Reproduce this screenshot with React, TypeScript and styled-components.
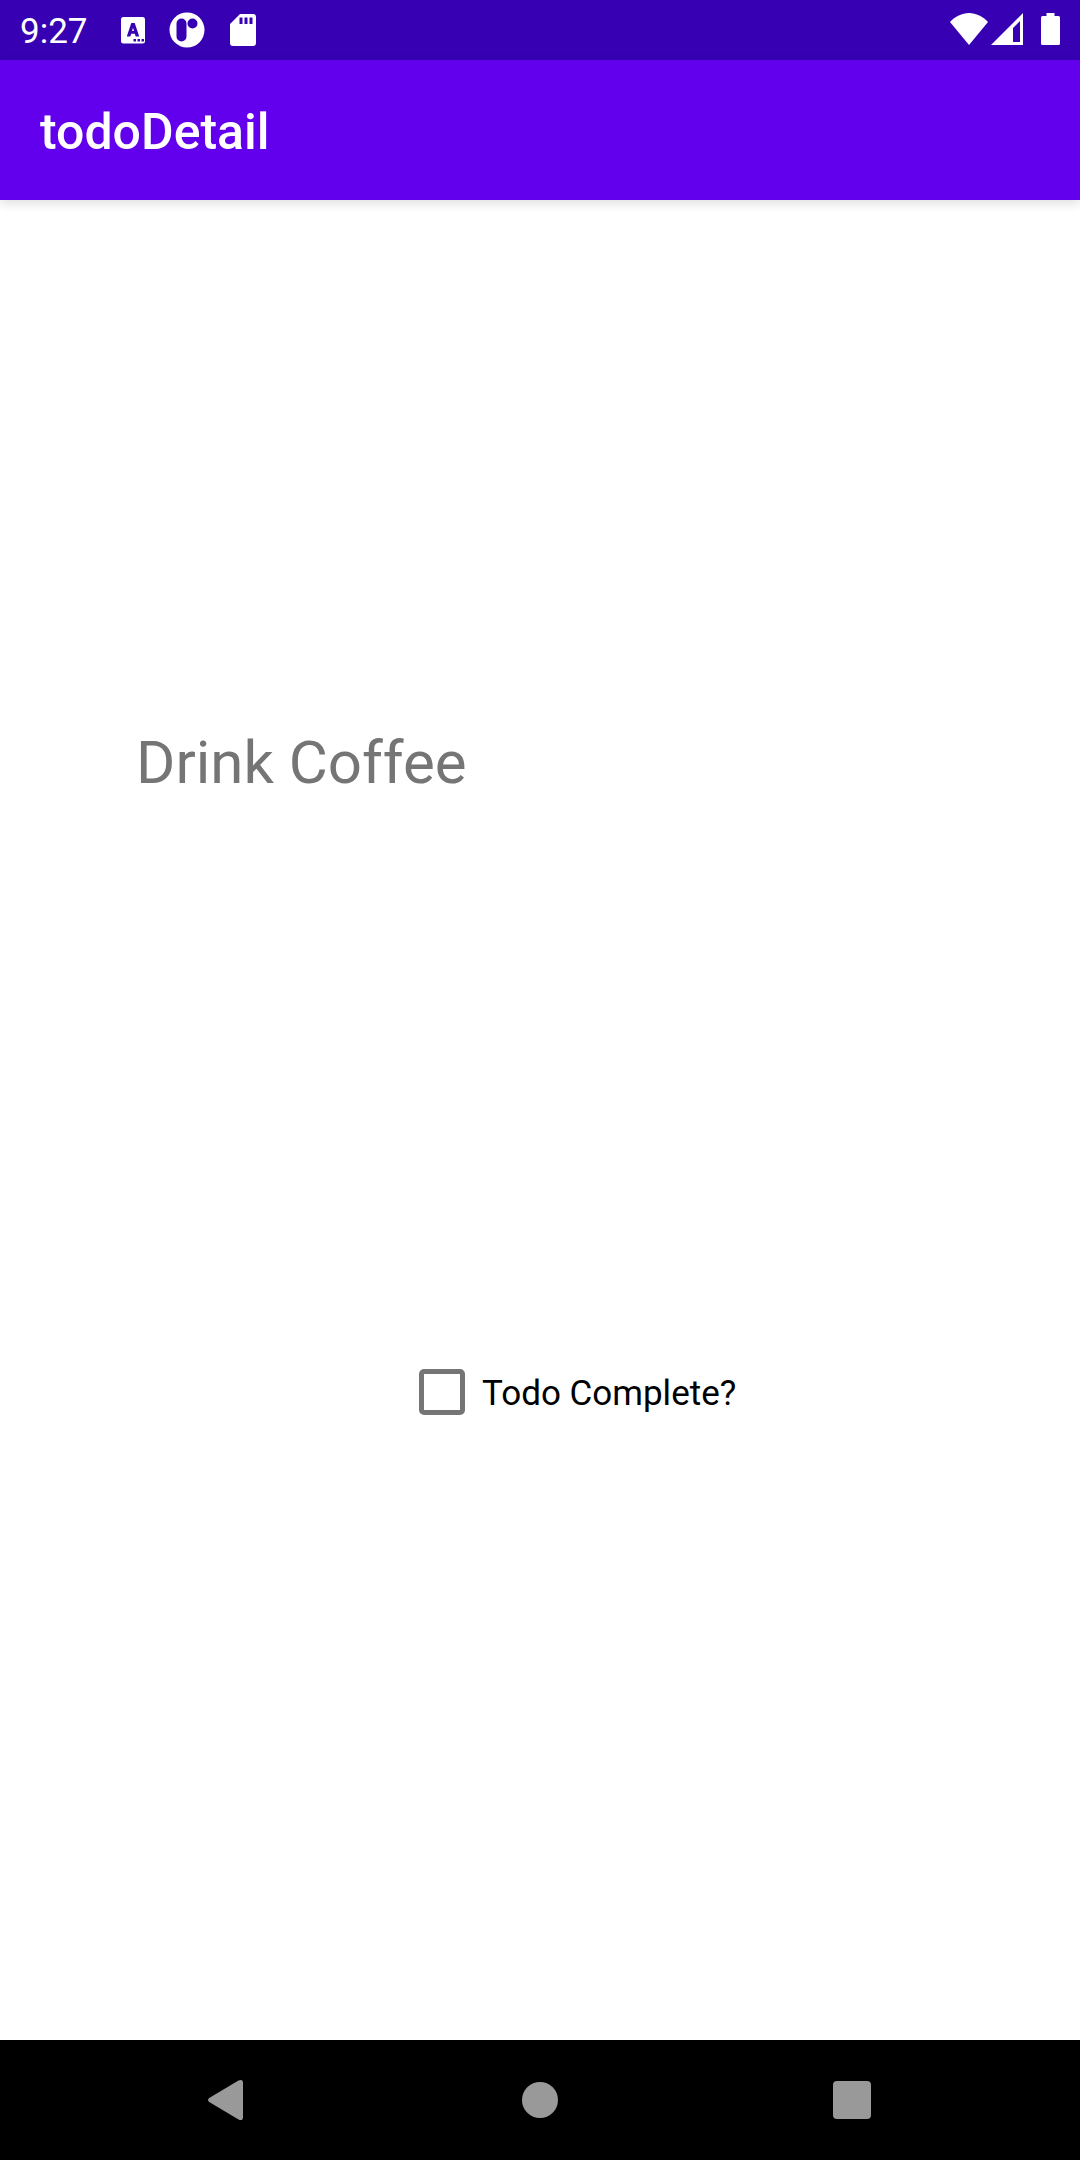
import React, { useState } from "react";
import styled, { createGlobalStyle } from "styled-components";

const GlobalStyle = createGlobalStyle`
  * {
    box-sizing: border-box;
  }

  body {
    margin: 0;
    background: #ffffff;
    font-family: Roboto, "Noto Sans", sans-serif;
  }
`;

const Screen = styled.div`
  display: flex;
  flex-direction: column;
  min-height: 100vh;
`;

const StatusBar = styled.div`
  display: flex;
  align-items: center;
  justify-content: space-between;
  height: 60px;
  padding: 0 20px;
  background: #3700b3;
  color: #ffffff;
`;

const StatusGroup = styled.div<{ $gap: number }>`
  display: flex;
  align-items: center;
  gap: ${({ $gap }) => $gap}px;
`;

const Clock = styled.time`
  margin-right: 9px;
  padding-top: 4px;
  font-size: 35px;
  line-height: 40px;
`;

const Icon = styled.svg<{ $width: number; $height: number }>`
  display: block;
  flex: none;
  width: ${({ $width }) => $width}px;
  height: ${({ $height }) => $height}px;
  fill: currentColor;
`;

const AppBar = styled.header`
  display: flex;
  align-items: center;
  height: 140px;
  padding: 4px 40px 0;
  background: #6200ee;
  box-shadow: 0 4px 10px rgba(0, 0, 0, 0.12);
`;

const Title = styled.h1`
  margin: 0;
  color: #ffffff;
  font-size: 50px;
  font-weight: 500;
  line-height: 60px;
`;

const Content = styled.main`
  display: flex;
  flex: 1;
  flex-direction: column;
  align-items: flex-start;
  gap: 554px;
  padding: 528px 40px 0 136px;
`;

const TodoName = styled.p`
  margin: 0;
  color: #757575;
  font-size: 60px;
  line-height: 70px;
`;

const CheckField = styled.label`
  display: flex;
  align-items: center;
  gap: 17px;
  height: 80px;
  margin-left: 283px;
  color: #000000;
  font-size: 35px;
  line-height: 40px;
  cursor: pointer;
`;

const CheckText = styled.span`
  padding-top: 4px;
`;

const CheckBox = styled.input`
  appearance: none;
  flex: none;
  width: 46px;
  height: 46px;
  margin: 0;
  border: 5px solid #757575;
  border-radius: 5px;
  background: #ffffff;

  &:checked {
    border-color: #03dac5;
    background: #03dac5;
  }
`;

const NavBar = styled.nav`
  display: flex;
  align-items: center;
  justify-content: center;
  gap: 152px;
  height: 120px;
  background: #000000;
`;

const NavButton = styled.button`
  display: flex;
  align-items: center;
  justify-content: center;
  width: 160px;
  height: 120px;
  padding: 0;
  border: 0;
  background: transparent;
  color: #999999;
  cursor: pointer;
`;

export default function App() {
  const [complete, setComplete] = useState(false);

  return (
    <Screen>
      <GlobalStyle />
      <StatusBar>
        <StatusGroup $gap={22}>
          <Clock>9:27</Clock>
          <Icon $width={28} $height={36} viewBox="0 0 28 36" aria-hidden="true">
            <path
              fillRule="evenodd"
              d="M4.500 5h19a2.500 2.500 0 0 1 2.500 2.500v21.500a2.500 2.500 0 0 1-2.500 2.500h-19a2.500 2.500 0 0 1-2.500-2.500V7.500A2.500 2.500 0 0 1 4.500 5zM12.300 11 7.800 24.500h3.500l.9-2.800h3.600l.9 2.800h3.500L15.700 11zM13 19l1-3.200 1 3.200zM14.500 27v2.500H17V27zm4 0v2.500H21V27zm4 0v2.500H25V27z"
            />
          </Icon>
          <Icon $width={36} $height={36} viewBox="0 0 36 36" aria-hidden="true">
            <path
              fillRule="evenodd"
              d="M18 .5a17.500 17.500 0 1 1 0 35a17.500 17.500 0 0 1 0-35zM12.500 6.500a5 5 0 0 0-5 5v13a5 5 0 0 0 10 0v-13a5 5 0 0 0-5-5zM23.500 6.500a5 5 0 1 0 0 10a5 5 0 0 0 0-10z"
            />
          </Icon>
          <Icon $width={32} $height={36} viewBox="2 0 32 36" aria-hidden="true">
            <path
              fillRule="evenodd"
              d="M15 2h13a3 3 0 0 1 3 3v26a3 3 0 0 1-3 3H8a3 3 0 0 1-3-3V12zM14.500 5.500v6.500h3v-6.500zm5 0v6.500h3v-6.500zm5 0v6.500h3v-6.500z"
            />
          </Icon>
        </StatusGroup>
        <StatusGroup $gap={3}>
          <Icon $width={38} $height={34} viewBox="0 0 38 34" aria-hidden="true">
            <path d="M0 9C5 3.500 12 0 19 0s14 3.500 19 9L19 32z" />
          </Icon>
          <Icon $width={32} $height={34} viewBox="0 0 32 34" aria-hidden="true">
            <path fillRule="evenodd" d="M0 32 32 0v32zM22 15v14h7V8z" />
          </Icon>
          <Icon $width={34} $height={34} viewBox="0 0 34 34" aria-hidden="true">
            <path d="M20.500 0h8v3h4a1.500 1.500 0 0 1 1.500 1.500v26a1.500 1.500 0 0 1-1.500 1.500H16.500a1.500 1.500 0 0 1-1.500-1.500v-26A1.500 1.500 0 0 1 16.500 3h4z" />
          </Icon>
        </StatusGroup>
      </StatusBar>

      <AppBar>
        <Title>todoDetail</Title>
      </AppBar>

      <Content>
        <TodoName>Drink Coffee</TodoName>
        <CheckField htmlFor="todo-complete">
          <CheckBox
            id="todo-complete"
            type="checkbox"
            checked={complete}
            onChange={(event) => setComplete(event.target.checked)}
          />
          <CheckText>Todo Complete?</CheckText>
        </CheckField>
      </Content>

      <NavBar>
        <NavButton type="button" aria-label="Back">
          <Icon $width={50} $height={50} viewBox="0 0 50 50" aria-hidden="true">
            <path d="M6.200 23 35.500 5.500Q40 3.500 40 8v34q0 4.500-4.500 2.500L6.200 27q-2.400-2 0-4z" />
          </Icon>
        </NavButton>
        <NavButton type="button" aria-label="Home">
          <Icon $width={50} $height={50} viewBox="0 0 50 50" aria-hidden="true">
            <circle cx="25" cy="25" r="18" />
          </Icon>
        </NavButton>
        <NavButton type="button" aria-label="Overview">
          <Icon $width={50} $height={50} viewBox="0 0 50 50" aria-hidden="true">
            <rect x="6" y="6" width="38" height="38" rx="4" />
          </Icon>
        </NavButton>
      </NavBar>
    </Screen>
  );
}
